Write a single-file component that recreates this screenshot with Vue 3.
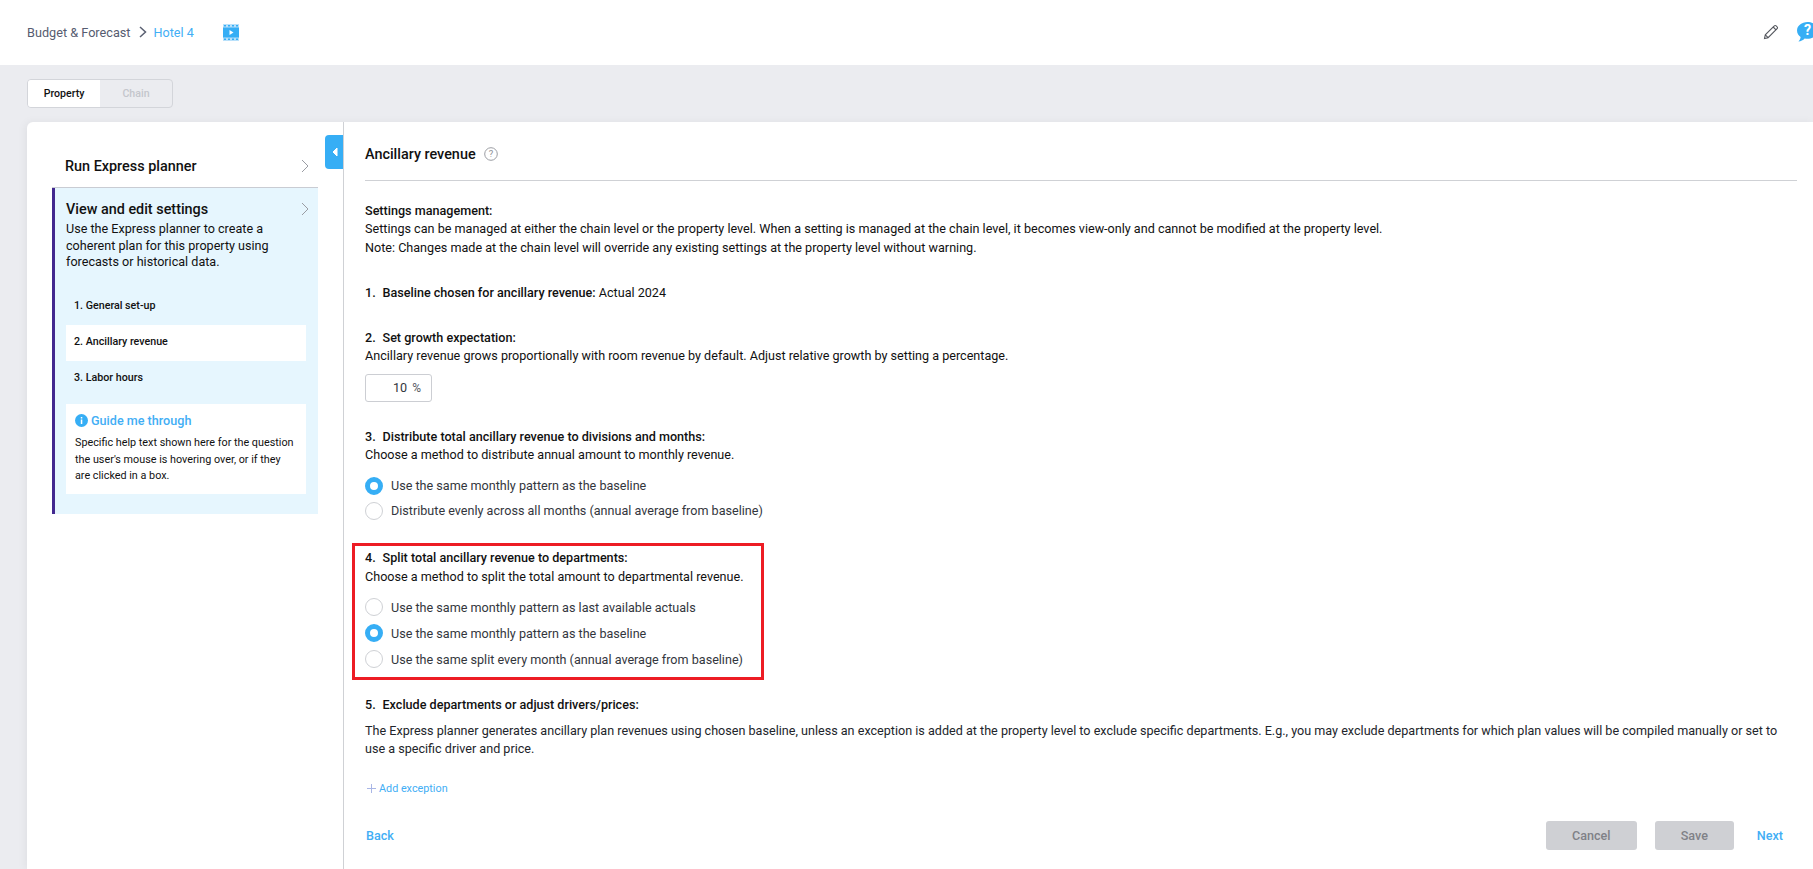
<script setup>
const steps = ['1. General set-up', '2. Ancillary revenue', '3. Labor hours']
const distribute = [
  { label: 'Use the same monthly pattern as the baseline', on: true },
  { label: 'Distribute evenly across all months (annual average from baseline)', on: false }
]
const split = [
  { label: 'Use the same monthly pattern as last available actuals', on: false },
  { label: 'Use the same monthly pattern as the baseline', on: true },
  { label: 'Use the same split every month (annual average from baseline)', on: false }
]
</script>

<template>
  <div class="page">
    <header class="top">
      <span class="crumb">Budget &amp; Forecast</span>
      <svg class="crumb-chev" width="9" height="14" viewBox="0 0 9 14"><path d="M1 2l5.500 5L1 12" fill="none" stroke="#5a6072" stroke-width="1.500"/></svg>
      <span class="hotel">Hotel 4</span>
      <svg class="film" width="16" height="17" viewBox="0 0 16 17">
        <rect y="0" width="16" height="17" fill="#b9e1fb"/>
        <rect y="3.500" width="16" height="10" fill="#36aef5"/>
        <path d="M1 1h2v1.500H1zM5 1h2v1.500H5zM9 1h2v1.500H9zM13 1h2v1.500h-2zM1 14.500h2V16H1zM5 14.500h2V16H5zM9 14.500h2V16H9zM13 14.500h2V16h-2z" fill="#36aef5"/>
        <path d="M6.500 6l4 2.500-4 2.500z" fill="#fff"/>
      </svg>
      <span class="grow"></span>
      <svg class="pencil" width="16" height="16" viewBox="0 0 16 16"><path d="M1.500 14.500l.8-3.600L11.300 1.900a1.300 1.300 0 0 1 1.900 0l.9.9a1.300 1.300 0 0 1 0 1.900L5.100 13.700zM2.300 10.900l2.800 2.800M10.200 3l2.800 2.800" fill="none" stroke="#55585f" stroke-width="1.100"/></svg>
      <svg class="bubble" width="21" height="20" viewBox="0 0 22 21"><path d="M11 0c6 0 11 3.900 11 8.800s-5 8.800-11 8.800c-1 0-2-.1-3-.3C6.500 19 4 20.300 1.500 20.500c1.300-1.300 2.100-3 2.300-4.800C1.500 14.100 0 11.600 0 8.800 0 3.900 5 0 11 0z" fill="#36aef5"/><text x="11" y="14" text-anchor="middle" class="bubble-q">?</text></svg>
    </header>

    <div class="body">
      <div class="tabs">
        <span class="tab on">Property</span>
        <span class="tab">Chain</span>
      </div>

      <main class="card">
        <aside class="side">
          <div class="run">
            <span>Run Express planner</span>
            <svg width="9" height="14" viewBox="0 0 9 14"><path d="M1 1l6 6-6 6" fill="none" stroke="#9a9ca3" stroke-width="1"/></svg>
          </div>
          <section class="active">
            <div class="active-head">
              <span>View and edit settings</span>
              <svg width="9" height="14" viewBox="0 0 9 14"><path d="M1 1l6 6-6 6" fill="none" stroke="#9a9ca3" stroke-width="1"/></svg>
            </div>
            <p class="active-desc">Use the Express planner to create a coherent plan for this property using forecasts or historical data.</p>
            <ul class="steps">
              <li v-for="(s, i) in steps" :key="s" :class="{ current: i === 1 }">{{ s }}</li>
            </ul>
            <div class="guide">
              <div class="guide-title">
                <svg width="13" height="13" viewBox="0 0 13 13"><circle cx="6.500" cy="6.500" r="6.500" fill="#36aef5"/><rect x="5.800" y="5.500" width="1.500" height="4.500" fill="#fff"/><rect x="5.800" y="3" width="1.500" height="1.500" fill="#fff"/></svg>
                <span>Guide me through</span>
              </div>
              <p>Specific help text shown here for the question the user's mouse is hovering over, or if they are clicked in a box.</p>
            </div>
          </section>
        </aside>

        <section class="content">
          <button class="collapse" aria-label="Collapse">
            <svg width="6" height="10" viewBox="0 0 6 10"><path d="M5 1v8L1 5z" fill="#fff" stroke="#fff" stroke-width="1" stroke-linejoin="round"/></svg>
          </button>

          <div class="title-row">
            <h1>Ancillary revenue</h1>
            <svg width="14" height="14" viewBox="0 0 14 14"><circle cx="7" cy="7" r="6.300" fill="none" stroke="#9b9da3" stroke-width="1"/><text x="7" y="10.300" text-anchor="middle" class="q">?</text></svg>
          </div>

          <div class="block mgmt">
            <div class="bold">Settings management:</div>
            <div class="l18">Settings can be managed at either the chain level or the property level. When a setting is managed at the chain level, it becomes view-only and cannot be modified at the property level.</div>
            <div class="l19">Note: Changes made at the chain level will override any existing settings at the property level without warning.</div>
          </div>

          <div class="block b1"><span class="bold"><span class="num">1.</span>Baseline chosen for ancillary revenue:</span> Actual 2024</div>

          <div class="block b2">
            <div class="bold"><span class="num">2.</span>Set growth expectation:</div>
            <div class="l18">Ancillary revenue grows proportionally with room revenue by default. Adjust relative growth by setting a percentage.</div>
            <div class="pct"><span>10</span><span class="sign">%</span></div>
          </div>

          <div class="block b3">
            <div class="bold"><span class="num">3.</span>Distribute total ancillary revenue to divisions and months:</div>
            <div class="l18">Choose a method to distribute annual amount to monthly revenue.</div>
            <div class="radios r1">
              <label v-for="r in distribute" :key="r.label" class="radio">
                <i :class="{ on: r.on }"></i><span>{{ r.label }}</span>
              </label>
            </div>
          </div>

          <div class="highlight">
            <div class="bold"><span class="num">4.</span>Split total ancillary revenue to departments:</div>
            <div class="l19">Choose a method to split the total amount to departmental revenue.</div>
            <div class="radios r2">
              <label v-for="r in split" :key="r.label" class="radio">
                <i :class="{ on: r.on }"></i><span>{{ r.label }}</span>
              </label>
            </div>
          </div>

          <div class="block b5">
            <div class="bold"><span class="num">5.</span>Exclude departments or adjust drivers/prices:</div>
            <p>The Express planner generates ancillary plan revenues using chosen baseline, unless an exception is added at the property level to exclude specific departments. E.g., you may exclude departments for which plan values will be compiled manually or set to use a specific driver and price.</p>
          </div>

          <div class="add">
            <svg width="9" height="9" viewBox="0 0 9 9"><path d="M4.500 0v9M0 4.500h9" stroke="#a9b6e6" stroke-width="1"/></svg>
            <span>Add exception</span>
          </div>

          <footer class="foot">
            <span class="link back">Back</span>
            <span class="grow"></span>
            <span class="btn cancel">Cancel</span>
            <span class="btn save">Save</span>
            <span class="link next">Next</span>
          </footer>
        </section>
      </main>
    </div>
  </div>
</template>

<style>
html, body { margin: 0; overflow: hidden; }
</style>

<style scoped>
* { box-sizing: border-box; }
.page { width: 1813px; height: 869px; display: flex; flex-direction: column; background: #ebecf0; font-family: Roboto, "Liberation Sans", sans-serif; font-size: 12.600px; color: #111; overflow: hidden; }
.grow { flex: 1; }
.top { height: 65px; flex: none; background: #fff; display: flex; align-items: center; padding: 0 0 1px 27px; }
.crumb { color: #565c70; font-size: 12.700px; }
.crumb-chev { margin: 0 6px 0 8px; flex: none; }
.hotel { color: #42aef5; font-size: 12.600px; }
.film { margin-left: 29px; flex: none; }
.pencil { margin-right: 18px; flex: none; }
.bubble { margin-right: -5px; flex: none; }
.bubble-q { font: 700 15px Roboto, sans-serif; fill: #fff; }
.body { flex: 1; min-height: 0; padding: 14px 0 0 27px; display: flex; flex-direction: column; }
.tabs { width: 146px; height: 29px; border: 1px solid #d3d5da; border-radius: 4px; display: flex; overflow: hidden; flex: none; }
.tab { width: 72px; display: flex; align-items: center; justify-content: center; font-size: 10.600px; font-weight: 500; color: #c4c6cc; padding-bottom: 1px; }
.tab.on { background: #fff; color: #111; }
.card { margin-top: 14px; flex: 1; min-height: 0; background: #fff; border-radius: 6px 0 0 0; display: flex; box-shadow: -2px 0 8px rgba(0, 0, 0, .05); }
.side { width: 317px; flex: none; border-right: 1px solid #cfd1d5; padding: 25px 25px 0; }
.run { height: 41px; display: flex; justify-content: space-between; align-items: center; padding: 0 8px 2px 13px; font-size: 14.400px; font-weight: 500; border-bottom: 1px solid #c9ccd3; width: 266px; }
.active { width: 266px; height: 326px; background: #e6f6fe; border-left: 3px solid #43288f; padding: 12px 0 0 11px; }
.active-head { display: flex; justify-content: space-between; align-items: center; height: 18px; font-size: 14.400px; font-weight: 500; padding-right: 8px; }
.active-desc { margin: 3px 9px 0 0; font-size: 12.600px; line-height: 16.500px; width: 230px; }
.steps { list-style: none; margin: 18.500px 0 0; padding: 0; width: 240px; }
.steps li { height: 36px; display: flex; align-items: center; padding: 0 0 4px 8px; font-size: 10.700px; font-weight: 500; }
.steps li.current { background: #fff; }
.guide { width: 240px; height: 90px; margin-top: 7px; background: #fff; padding: 9px 9px 0; }
.guide-title { display: flex; align-items: center; gap: 3px; font-size: 12.600px; font-weight: 500; color: #42aef5; height: 15px; }
.guide p { margin: 7px 0 0; font-size: 10.800px; line-height: 16.500px; }
.content { flex: 1; min-width: 0; position: relative; padding: 0 16px 0 21px; }
.collapse { position: absolute; left: -19px; top: 13px; width: 18px; height: 34px; background: #36aef5; border: 0; border-radius: 4px 0 0 4px; padding: 0 0 0 2px; display: flex; align-items: center; justify-content: center; }
.title-row { height: 59px; border-bottom: 1px solid #cfd1d5; display: flex; align-items: center; gap: 8px; padding-top: 6px; }
h1 { margin: 0; font-size: 14.400px; font-weight: 500; }
.q { font: 400 9.500px Roboto, sans-serif; fill: #8f9197; }
.block { line-height: 18px; }
.bold { font-weight: 500; line-height: 18px; }
.num { display: inline-block; width: 17.500px; }
.l18 { line-height: 18px; }
.l19 { line-height: 20px; }
.mgmt { margin-top: 21px; }
.b1 { margin-top: 26px; }
.b2 { margin-top: 27px; }
.pct { width: 67px; height: 28px; margin-top: 9px; border: 1px solid #ccced3; border-radius: 3px; display: flex; justify-content: flex-end; align-items: center; gap: 5px; padding-right: 10px; color: #33363d; }
.sign { color: #55585f; font-size: 12px; }
.b3 { margin-top: 26px; }
.radios { display: flex; flex-direction: column; }
.r1 { margin-top: 13px; gap: 7px; }
.radio { display: flex; align-items: center; gap: 8px; height: 18px; color: #33363d; }
.radio i { width: 18px; height: 18px; border-radius: 50%; border: 1px solid #cfd1d5; background: #fff; flex: none; }
.radio i.on { border: 5px solid #36aef5; }
.highlight { margin: 23px 0 0 -13px; width: 412px; height: 137px; border: 3px solid #ed1c24; padding: 3px 0 0 10px; }
.r2 { margin-top: 11px; gap: 8px; }
.b5 { margin-top: 16px; }
.b5 p { margin: 8px 0 0; line-height: 18px; color: #22252b; }
.add { display: flex; align-items: center; gap: 3px; margin: 22px 0 0 2px; height: 16px; font-size: 10.800px; color: #42aef5; }
.foot { display: flex; align-items: center; height: 30px; margin-top: 24px; }
.link { color: #42aef5; font-weight: 500; font-size: 12.600px; }
.back { margin-left: 1px; }
.btn { height: 29px; border-radius: 3px; background: #cfd0d4; color: #7f8187; display: flex; align-items: center; justify-content: center; font-weight: 500; }
.cancel { width: 91px; }
.save { width: 79px; margin-left: 18px; }
.next { margin-left: 23px; margin-right: 14px; }
</style>
